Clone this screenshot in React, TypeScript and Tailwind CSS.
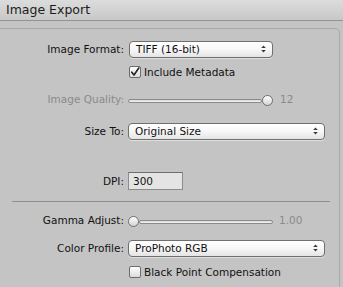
import React from "react";

const font = { fontFamily: '"DejaVu Sans", "Liberation Sans", sans-serif' };

function Arrows() {
  return (
    <svg width="5" height="8" viewBox="0 0 5 8" className="shrink-0">
      <path d="M2.5 0.5 L4.8 3 L0.2 3 Z" fill="#3a3a3a" />
      <path d="M2.5 7.5 L4.8 5 L0.2 5 Z" fill="#3a3a3a" />
    </svg>
  );
}

function Popup({ value, width }: { value: string; width: string }) {
  return (
    <div
      className={`${width} h-[17px] flex items-center justify-between pl-[6px] pr-[6px] rounded-[4px] border border-[#6f6f6f] bg-gradient-to-b from-white via-[#f7f7f7] to-[#e4e4e4] shadow-[0_1px_0_rgba(255,255,255,0.45)]`}
    >
      <span className="text-[10.5px] leading-[15px] pt-[1px] text-[#111]">{value}</span>
      <Arrows />
    </div>
  );
}

function Checkbox({ checked }: { checked?: boolean }) {
  return (
    <div className="mt-[1px] ml-[1px] w-[12px] h-[12px] rounded-[2px] border border-[#6c6c6c] bg-gradient-to-b from-white to-[#dcdcdc] flex items-center justify-center">
      {checked && (
        <svg width="10" height="10" viewBox="0 0 10 10">
          <path
            d="M1.8 5.2 L4 8 L8.8 1"
            stroke="#222"
            strokeWidth="1.6"
            fill="none"
            strokeLinecap="round"
            strokeLinejoin="round"
          />
        </svg>
      )}
    </div>
  );
}

function Slider({ knobAt }: { knobAt: "start" | "end" }) {
  return (
    <div className="mt-[2px] w-[145px] h-[11px] flex items-center">
      {knobAt === "start" && <Knob />}
      <div className="flex-1 h-[4px] rounded-full border border-[#8a8a8a] bg-gradient-to-b from-[#d8d8d8] to-[#f4f4f4]" />
      {knobAt === "end" && <Knob />}
    </div>
  );
}

function Knob() {
  return (
    <div className="w-[11px] h-[11px] rounded-full border border-[#707070] bg-gradient-to-b from-white to-[#d4d4d4] shrink-0" />
  );
}

function Label({
  text,
  lead,
  muted,
}: {
  text: string;
  lead: string;
  muted?: boolean;
}) {
  return (
    <div
      className={`w-[124px] shrink-0 text-right text-[10.5px] ${lead} ${
        muted ? "text-[#8a8a8a]" : "text-[#111]"
      }`}
    >
      {text}
    </div>
  );
}

export default function App() {
  return (
    <div
      className="w-[343px] h-[287px] overflow-hidden bg-[#c4c4c4] flex flex-col"
      style={font}
    >
      {/* title bar */}
      <div className="h-[21px] shrink-0 border-b border-[#939393] bg-gradient-to-b from-[#dcdcdc] to-[#c8c8c8] pl-[6px] pt-[2px]">
        <div className="text-[12.5px] leading-[16px] text-[#1c1c1c]">Image Export</div>
      </div>

      <div className="mt-[7px] w-[340px] flex-1 border-t border-r border-[#a9a9a9] rounded-tr-[5px] flex flex-col">
        {/* image format */}
        <div className="mt-[11px] flex items-center gap-[4px]">
          <Label text="Image Format:" lead="leading-[17px] pt-[1px]" />
          <div className="ml-[1px]">
            <Popup value="TIFF (16-bit)" width="w-[144px]" />
          </div>
        </div>

        {/* metadata */}
        <div className="mt-[7px] h-[14px] flex items-start pl-[128px]">
          <Checkbox checked />
          <span className="ml-[3px] text-[10.5px] leading-[14px] text-[#111]">
            Include Metadata
          </span>
        </div>

        {/* quality */}
        <div className="mt-[14px] flex items-start gap-[4px]">
          <Label text="Image Quality:" lead="leading-[12px]" muted />
          <Slider knobAt="end" />
          <span className="ml-[3px] text-[10.5px] leading-[12px] text-[#8a8a8a]">12</span>
        </div>

        {/* size */}
        <div className="mt-[16px] flex items-center gap-[4px]">
          <Label text="Size To:" lead="leading-[17px] pt-[1px]" />
          <Popup value="Original Size" width="w-[197px]" />
        </div>

        {/* dpi */}
        <div className="mt-[32px] flex items-center gap-[4px]">
          <Label text="DPI:" lead="leading-[18px]" />
          <div className="w-[55px] h-[18px] border border-[#8c8c8c] border-t-[#6f6f6f] bg-[#e4e4e4] pl-[4px] text-[10.5px] leading-[16px] text-[#111]">
            300
          </div>
        </div>

        <div className="mt-[11px] ml-[12px] w-[318px] h-[1px] bg-[#8e8e8e]" />

        {/* gamma */}
        <div className="mt-[12px] flex items-start gap-[4px]">
          <Label text="Gamma Adjust:" lead="leading-[12px]" />
          <Slider knobAt="start" />
          <span className="ml-[2px] text-[10.5px] leading-[12px] text-[#8a8a8a]">1.00</span>
        </div>

        {/* color profile */}
        <div className="mt-[12px] flex items-center gap-[4px]">
          <Label text="Color Profile:" lead="leading-[17px] pt-[1px]" />
          <Popup value="ProPhoto RGB" width="w-[197px]" />
        </div>

        {/* black point */}
        <div className="mt-[8px] h-[14px] flex items-start pl-[128px]">
          <Checkbox />
          <span className="ml-[3px] text-[10.5px] leading-[14px] text-[#111]">
            Black Point Compensation
          </span>
        </div>

        <div className="mt-[10px] ml-[12px] w-[318px] h-[1px] bg-[#8e8e8e]" />
      </div>
    </div>
  );
}
